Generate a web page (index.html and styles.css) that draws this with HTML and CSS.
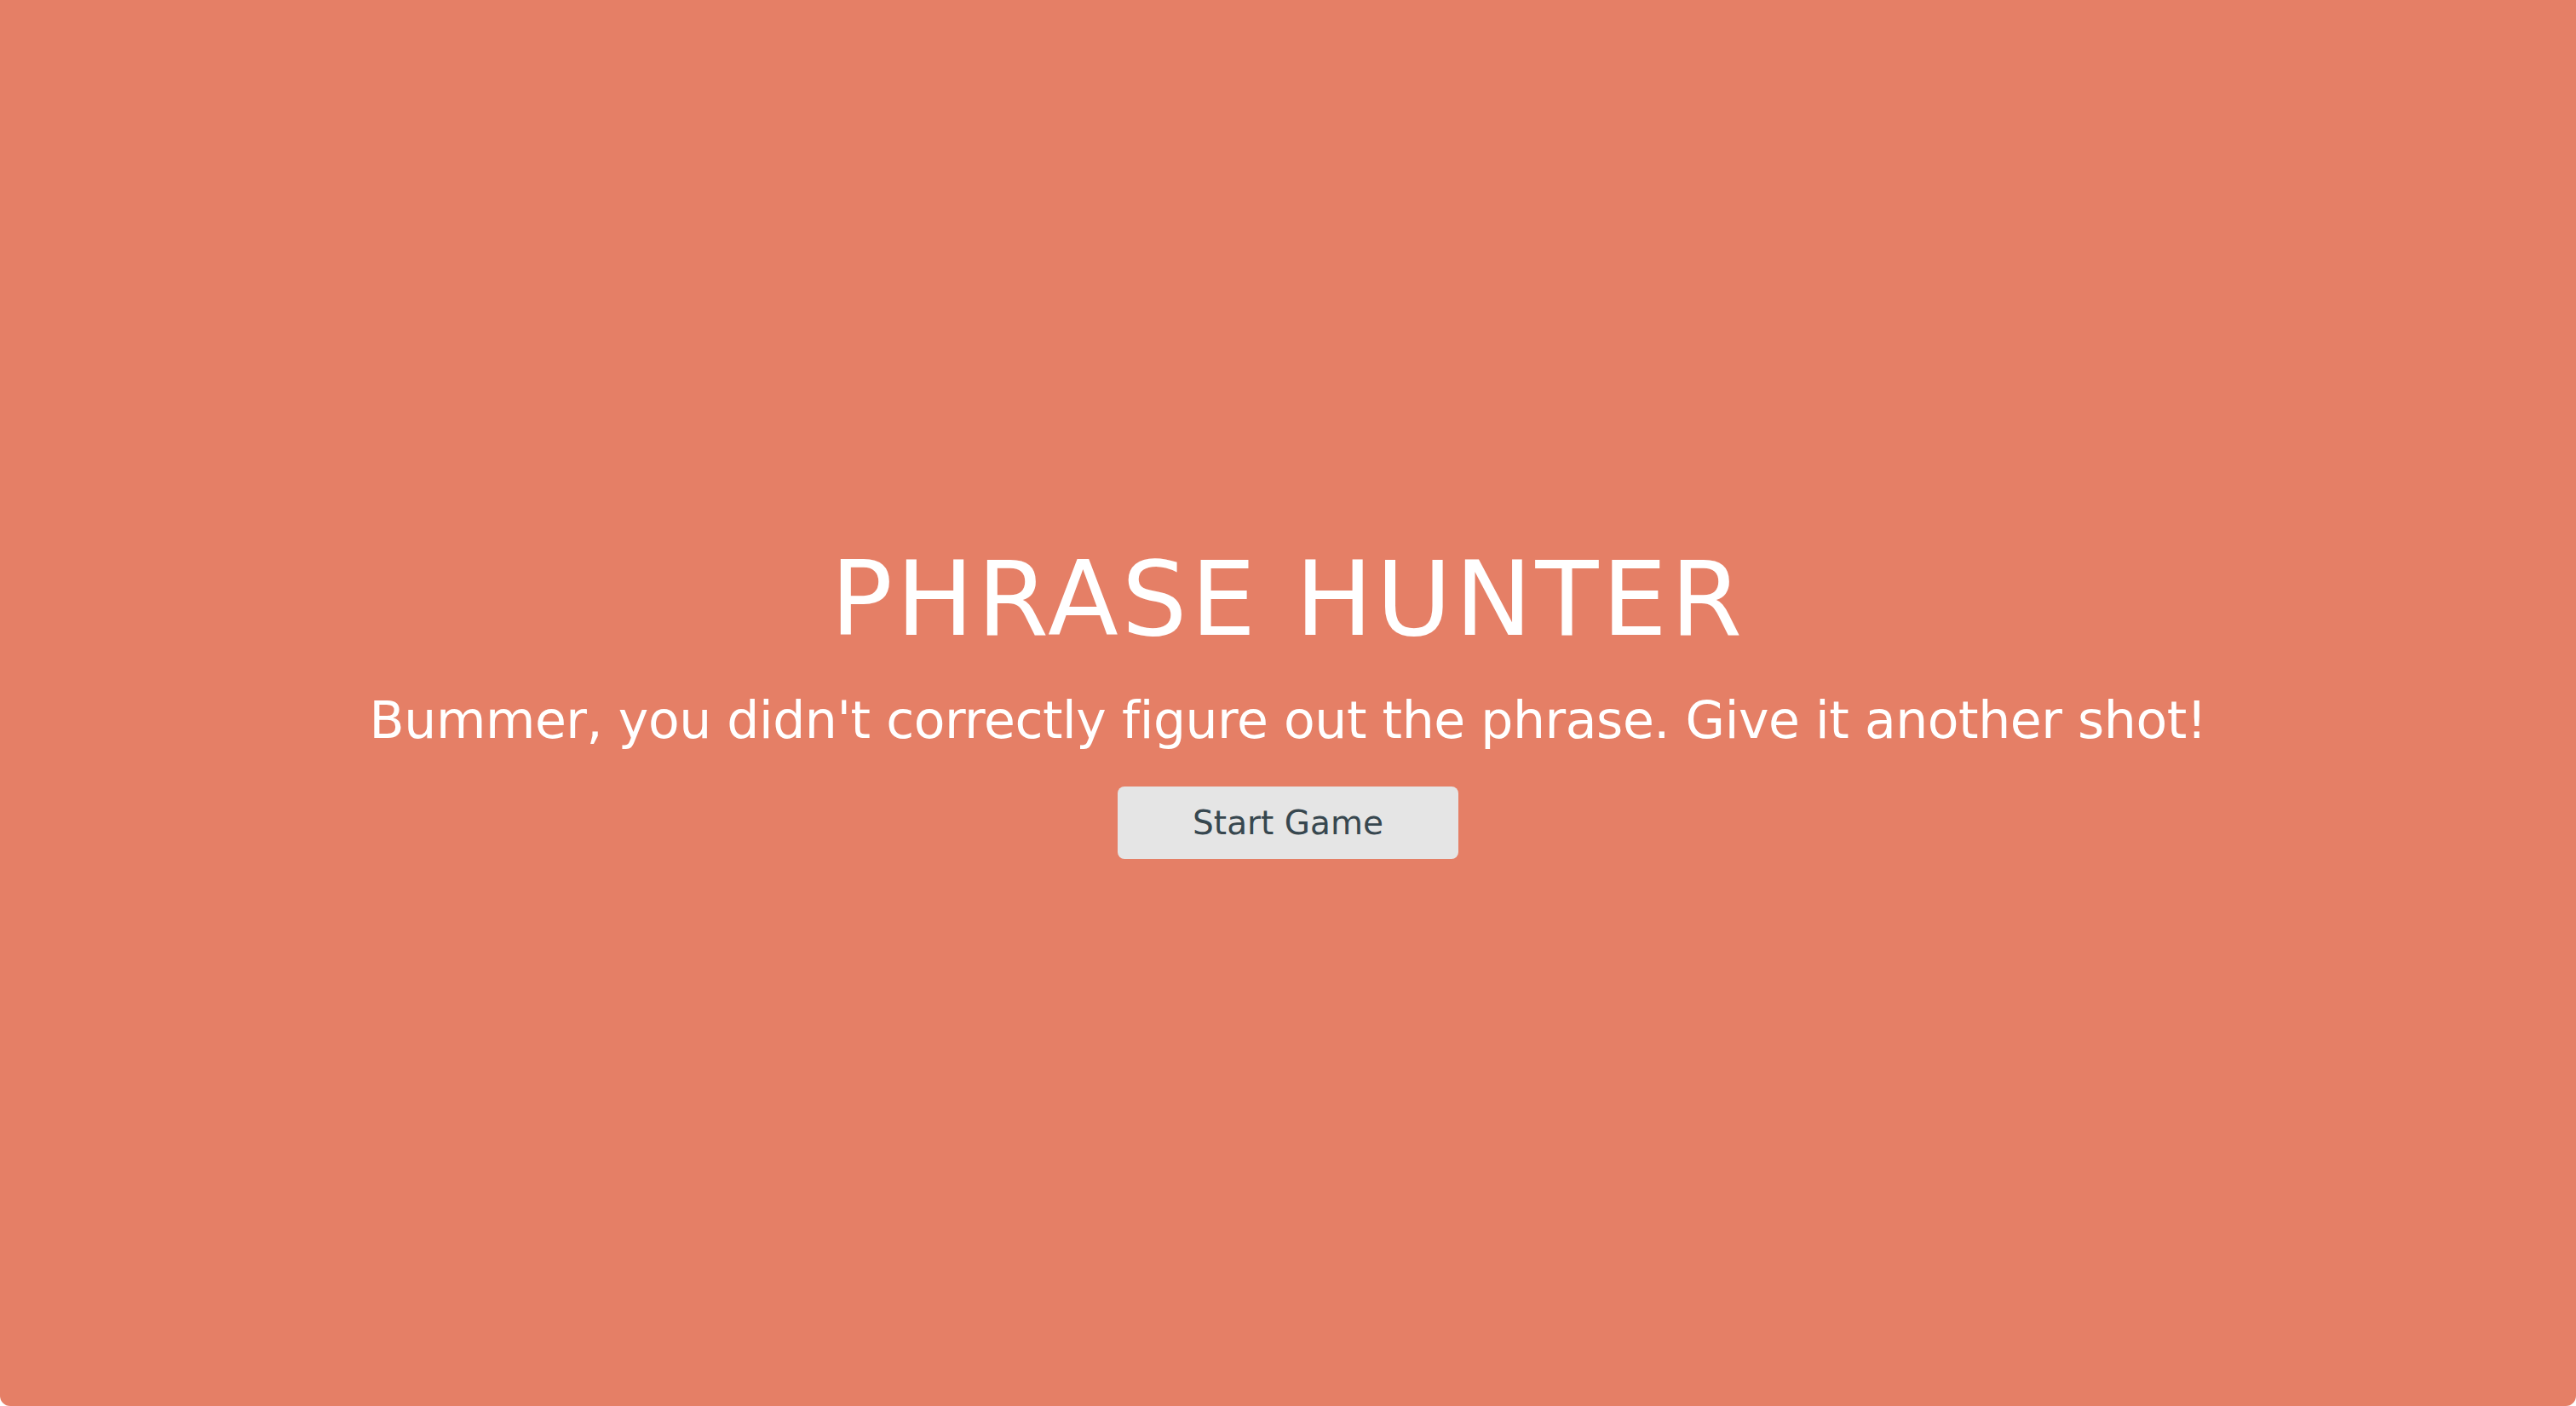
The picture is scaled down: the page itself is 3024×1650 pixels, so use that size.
FILE: index.html
```html
<!DOCTYPE html>
<html lang="en">
<head>
<meta charset="utf-8">
<title>Phrase Hunter</title>
<link rel="stylesheet" href="styles.css">
</head>
<body>
<div class="overlay">
  <h1 class="title">PHRASE HUNTER</h1>
  <h2 class="message">Bummer, you didn't correctly figure out the phrase. Give it another shot!</h2>
  <button class="btn-reset" type="button">Start Game</button>
</div>
</body>
</html>
```
FILE: styles.css
```css
html {
  background: #ffffff;
}
body {
  margin: 0;
  height: 100vh;
  overflow: hidden;
}
.overlay {
  box-sizing: border-box;
  height: 100%;
  background: #e57f66;
  border-radius: 0 0 12px 12px;
  display: flex;
  flex-direction: column;
  align-items: center;
  justify-content: center;
  font-family: "DejaVu Sans", sans-serif;
  color: #ffffff;
}
.title {
  margin: 0;
  font-size: 121px;
  font-weight: normal;
  line-height: 1;
  letter-spacing: 4px;
}
.message {
  margin: 51px 0 0;
  font-size: 60px;
  font-weight: normal;
  line-height: 1;
  letter-spacing: -0.45px;
}
.btn-reset {
  margin-top: 48px;
  width: 400px;
  height: 85px;
  border: none;
  border-radius: 8px;
  background: #e5e5e5;
  color: #37474f;
  font-family: "DejaVu Sans", sans-serif;
  font-size: 39px;
  padding: 0;
}
```
